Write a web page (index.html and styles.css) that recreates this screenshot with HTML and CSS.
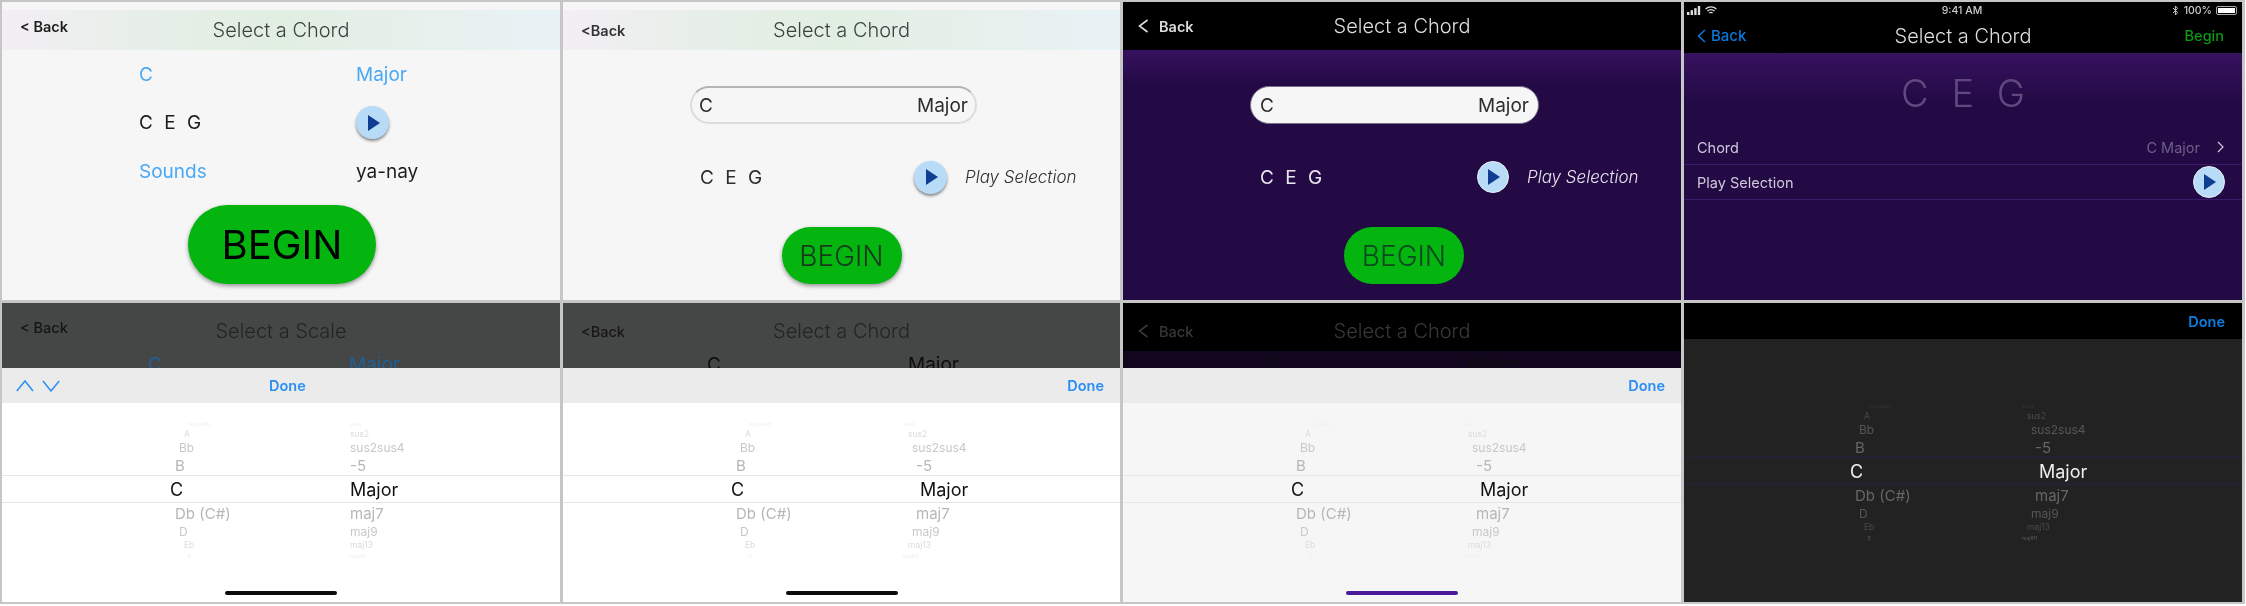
FILE: index.html
```html
<!DOCTYPE html>
<html>
<head>
  <title>Select a Chord</title>
  <link rel="stylesheet" href="styles.css">
</head>
<body>
  <div class="sheet">

    <!-- first version, text rows -->
    <section class="screen light">
      <header class="nav gradient">
        <span class="back back-raised">&lt; Back</span>
        <span class="title">Select a Chord</span>
      </header>
      <div class="text-form">
        <span class="link">C</span><span class="link">Major</span>
        <span class="notes">C E G</span>
        <span class="play"><svg viewBox="0 0 12 16"><polygon points="0,0 12,8 0,16"/></svg></span>
        <span class="link">Sounds</span><span>ya-nay</span>
      </div>
      <button class="begin begin-big">BEGIN</button>
    </section>

    <!-- pill version -->
    <section class="screen light">
      <header class="nav gradient">
        <span class="back back-tight">&lt;Back</span>
        <span class="title">Select a Chord</span>
      </header>
      <div class="pill"><span>C</span><span>Major</span></div>
      <div class="play-row">
        <span class="notes">C E G</span>
        <span class="play"><svg viewBox="0 0 12 16"><polygon points="0,0 12,8 0,16"/></svg></span>
        <em>Play Selection</em>
      </div>
      <button class="begin">BEGIN</button>
    </section>

    <!-- purple version -->
    <section class="screen purple">
      <header class="nav black">
        <span class="back back-wide"><svg class="chev-left" viewBox="0 0 11 14"><path d="M9.5 1 L1.5 7 L9.5 13"/></svg>Back</span>
        <span class="title">Select a Chord</span>
      </header>
      <div class="pill pill-solid"><span>C</span><span>Major</span></div>
      <div class="play-row">
        <span class="notes">C E G</span>
        <span class="play play-flat"><svg viewBox="0 0 12 16"><polygon points="0,0 12,8 0,16"/></svg></span>
        <em>Play Selection</em>
      </div>
      <button class="begin begin-flat">BEGIN</button>
    </section>

    <!-- native version -->
    <section class="screen purple native">
      <header class="native-head">
        <div class="status">
          <span class="status-left">
            <svg class="signal" viewBox="0 0 14 9"><rect x="0" y="6" width="2.4" height="3"/><rect x="3.6" y="4.2" width="2.4" height="4.8"/><rect x="7.2" y="2.2" width="2.4" height="6.8"/><rect x="10.8" y="0" width="2.4" height="9"/></svg>
            <svg class="wifi" viewBox="0 0 12 9"><path d="M0.6 3 A8 8 0 0 1 11.4 3"/><path d="M2.5 5 A5.2 5.2 0 0 1 9.5 5"/><path d="M4.4 7 A2.6 2.6 0 0 1 7.6 7"/></svg>
          </span>
          <span class="clock">9:41 AM</span>
          <span class="status-right">
            <svg class="bt" viewBox="0 0 7 11"><path d="M1 3 L5.6 7.6 L3.4 10 V1 L5.6 3.4 L1 8"/></svg>
            <span>100%</span>
            <span class="battery"><i></i></span>
          </span>
        </div>
        <div class="nav native-nav">
          <span class="back back-blue"><svg class="chev-left" viewBox="0 0 9 14"><path d="M8 1 L1.5 7 L8 13"/></svg>Back</span>
          <span class="title">Select a Chord</span>
          <span class="begin-link">Begin</span>
        </div>
      </header>
      <div class="big-notes">C E G</div>
      <div class="table-row first-row">
        <span>Chord</span>
        <span class="value">C Major<svg class="chev-right" viewBox="0 0 7 12"><path d="M1 1 L6 6 L1 11"/></svg></span>
      </div>
      <div class="table-row">
        <span>Play Selection</span>
        <span class="play play-flat"><svg viewBox="0 0 12 16"><polygon points="0,0 12,8 0,16"/></svg></span>
      </div>
    </section>

    <!-- scale picker open -->
    <section class="screen picker-screen">
      <div class="behind gray-behind">
        <header class="nav">
          <span class="back back-raised">&lt; Back</span>
          <span class="title">Select a Scale</span>
        </header>
        <div class="peek peek-blue"><span>C</span><span>Major</span></div>
      </div>
      <div class="toolbar toolbar-center">
        <svg class="arrows" viewBox="0 0 44 13"><path d="M0.8 12 L9 2 L17 12"/><path d="M27 2 L35 12 L43.2 2"/></svg>
        <span class="done">Done</span>
      </div>
      <div class="picker aligned">
        <div class="pk r0"><span>no quality</span><span>sus4</span></div>
        <div class="pk r1"><span>A</span><span>sus2</span></div>
        <div class="pk r2"><span>Bb</span><span>sus2sus4</span></div>
        <div class="pk r3"><span>B</span><span>-5</span></div>
        <div class="pk r4"><span>C</span><span>Major</span></div>
        <div class="pk r5"><span>Db (C#)</span><span>maj7</span></div>
        <div class="pk r6"><span>D</span><span>maj9</span></div>
        <div class="pk r7"><span>Eb</span><span>maj13</span></div>
        <div class="pk r8"><span>E</span><span>maj#11</span></div>
      </div>
      <div class="home-bar"></div>
    </section>

    <section class="screen picker-screen">
      <div class="behind gray-behind">
        <header class="nav">
          <span class="back back-tight">&lt;Back</span>
          <span class="title">Select a Chord</span>
        </header>
        <div class="peek"><span>C</span><span>Major</span></div>
      </div>
      <div class="toolbar"><span class="done">Done</span></div>
      <div class="picker">
        <div class="pk r0"><span>no quality</span><span>sus4</span></div>
        <div class="pk r1"><span>A</span><span>sus2</span></div>
        <div class="pk r2"><span>Bb</span><span>sus2sus4</span></div>
        <div class="pk r3"><span>B</span><span>-5</span></div>
        <div class="pk r4"><span>C</span><span>Major</span></div>
        <div class="pk r5"><span>Db (C#)</span><span>maj7</span></div>
        <div class="pk r6"><span>D</span><span>maj9</span></div>
        <div class="pk r7"><span>Eb</span><span>maj13</span></div>
        <div class="pk r8"><span>E</span><span>maj#11</span></div>
      </div>
      <div class="home-bar"></div>
    </section>

    <section class="screen picker-screen soft">
      <div class="behind dark-behind">
        <header class="nav">
          <span class="back back-wide"><svg class="chev-left" viewBox="0 0 11 14"><path d="M9.5 1 L1.5 7 L9.5 13"/></svg>Back</span>
          <span class="title">Select a Chord</span>
        </header>
        <div class="peek"><span>C</span><span>Major</span></div>
      </div>
      <div class="toolbar"><span class="done">Done</span></div>
      <div class="picker">
        <div class="pk r0"><span>no quality</span><span>sus4</span></div>
        <div class="pk r1"><span>A</span><span>sus2</span></div>
        <div class="pk r2"><span>Bb</span><span>sus2sus4</span></div>
        <div class="pk r3"><span>B</span><span>-5</span></div>
        <div class="pk r4"><span>C</span><span>Major</span></div>
        <div class="pk r5"><span>Db (C#)</span><span>maj7</span></div>
        <div class="pk r6"><span>D</span><span>maj9</span></div>
        <div class="pk r7"><span>Eb</span><span>maj13</span></div>
        <div class="pk r8"><span>E</span><span>maj#11</span></div>
      </div>
      <div class="home-bar home-purple"></div>
    </section>

    <section class="screen picker-screen night">
      <div class="toolbar"><span class="done">Done</span></div>
      <div class="picker">
        <div class="pk r0"><span>no quality</span><span>sus4</span></div>
        <div class="pk r1"><span>A</span><span>sus2</span></div>
        <div class="pk r2"><span>Bb</span><span>sus2sus4</span></div>
        <div class="pk r3"><span>B</span><span>-5</span></div>
        <div class="pk r4"><span>C</span><span>Major</span></div>
        <div class="pk r5"><span>Db (C#)</span><span>maj7</span></div>
        <div class="pk r6"><span>D</span><span>maj9</span></div>
        <div class="pk r7"><span>Eb</span><span>maj13</span></div>
        <div class="pk r8"><span>E</span><span>maj#11</span></div>
      </div>
    </section>

  </div>
</body>
</html>
```

FILE: styles.css
```css
:root {
  --paper: #f6f6f6;
  --edge: #c6c6c6;
  --link: #4aa9f5;
  --green: #05b50f;
  --ink: #1c1c1c;
  --done: #2a8ef5;
}
* {
  box-sizing: border-box;
}
html, body {
  margin: 0;
  background: #fff;
}
body {
  width: 2246px;
  height: 606px;
  overflow: hidden;
  font-family: Inter, "Liberation Sans", sans-serif;
  color: var(--ink);
}
.sheet {
  width: 2245px;
  height: 604px;
  padding: 2px;
  display: grid;
  grid-template-columns: 558px 557px 558px 558px;
  grid-template-rows: 298px 299px;
  gap: 3px;
  background: var(--edge);
  filter: blur(0.4px);
}
.screen {
  display: flex;
  flex-direction: column;
  overflow: hidden;
  background: var(--paper);
  font-size: 19px;
}

/* nav bars */
.nav {
  display: grid;
  grid-template-columns: 1fr auto 1fr;
  align-items: center;
  flex: none;
  height: 40px;
  margin-top: 8px;
}
.gradient {
  background: linear-gradient(90deg, #f3eef5 0%, #e7efe8 25%, #e1eee2 50%, #e6f0ea 70%, #e9f2f6 100%);
}
.black {
  height: 48px;
  margin-top: 0;
  background: #000;
  color: #ddd;
}
.title {
  font-size: 20px;
  font-weight: 300;
  color: #3d423f;
}
.black .title {
  color: #ddd;
}
.back {
  display: flex;
  align-items: center;
  font-size: 14.5px;
  font-weight: 600;
}
.back-raised {
  padding: 0 0 7px 18px;
}
.back-tight {
  padding-left: 18px;
  color: #333;
}
.back-wide {
  padding-left: 15px;
}
.chev-left {
  width: 11px;
  height: 14px;
  margin-right: 10px;
  fill: none;
  stroke: currentColor;
  stroke-width: 1.6;
}

/* text rows screen */
.text-form {
  display: grid;
  grid-template-columns: 217px 1fr;
  grid-auto-rows: 48.5px;
  align-items: center;
  padding-left: 137px;
}
.link {
  color: var(--link);
}
.notes {
  word-spacing: 6px;
}
.play {
  display: flex;
  align-items: center;
  justify-content: center;
  width: 33px;
  height: 33px;
  padding-left: 2px;
  border-radius: 50%;
  background: #b8dcf8;
  box-shadow: 0 2px 3px rgba(0, 0, 0, 0.45);
}
.play svg {
  width: 12px;
  height: 16px;
  fill: #0f3d91;
}
.play-flat {
  width: 32px;
  height: 32px;
  border: 1px solid #e4eef6;
  box-shadow: none;
}
.begin {
  display: block;
  flex: none;
  width: 120px;
  height: 57px;
  margin: 29px auto 0;
  padding: 0;
  border: none;
  border-radius: 29px;
  background: var(--green);
  box-shadow: 0 2px 4px rgba(0, 0, 0, 0.4);
  color: #173a1c;
  font-family: inherit;
  font-size: 28px;
  font-weight: 300;
}
.begin-big {
  width: 188px;
  height: 79px;
  margin: 9px 0 0 186px;
  border-radius: 40px;
  color: #000;
  font-size: 40px;
  font-weight: 400;
}
.begin-flat {
  margin-left: 221px;
  box-shadow: none;
  color: #0b4a1f;
}

/* pill screens */
.pill {
  display: flex;
  justify-content: space-between;
  align-items: center;
  flex: none;
  width: 287px;
  height: 38px;
  margin: 36px 0 0 127px;
  padding: 0 7px;
  border: 2px solid #dcdcdc;
  border-top-color: #b4b4b4;
  border-radius: 19px;
  color: #2e2e2e;
}
.pill-solid {
  width: 289px;
  border: 1px solid #77708a;
  padding: 0 9px;
  background: var(--paper);
}
.play-row {
  display: grid;
  grid-template-columns: 214px 33px auto;
  align-items: center;
  height: 42px;
  margin-top: 32px;
  padding-left: 137px;
  color: #2e2e2e;
}
.play-row em {
  margin-left: 18px;
  font-size: 17px;
  font-weight: 300;
}
.purple .play-row {
  grid-template-columns: 217px 32px auto;
  color: #e8e4ee;
}
.purple {
  background: #230a45 linear-gradient(180deg, #230a45 48px, #37125f 48px, #230a45 82px);
}

/* native screen */
.native {
  background: #210a42 linear-gradient(180deg, #37125f 51px, #230a45 100px);
}
.native-head {
  flex: none;
  height: 51px;
  background: #000;
  color: #ddd;
}
.status {
  display: grid;
  grid-template-columns: 1fr auto 1fr;
  align-items: center;
  height: 17px;
  padding: 0 5px 0 3px;
  font-size: 10.5px;
  font-weight: 500;
  color: #ccc;
}
.status-left, .status-right {
  display: flex;
  align-items: center;
}
.status-right {
  justify-content: flex-end;
}
.signal {
  width: 14px;
  height: 9px;
  fill: #ddd;
}
.wifi {
  width: 12px;
  height: 9px;
  margin-left: 4px;
  fill: none;
  stroke: #ddd;
  stroke-width: 1.4;
}
.bt {
  width: 7px;
  height: 11px;
  margin-right: 5px;
  fill: none;
  stroke: #ccc;
  stroke-width: 1;
}
.battery {
  width: 21px;
  height: 9px;
  margin-left: 4px;
  padding: 1px;
  border: 1px solid #aaa;
  border-radius: 2px;
}
.battery i {
  display: block;
  height: 100%;
  background: #fff;
}
.native-nav {
  height: 33px;
  margin: 0;
}
.native-nav .title {
  color: #ddd;
}
.back-blue {
  padding-left: 13px;
  color: #0a78d8;
  font-size: 15px;
  font-weight: 500;
}
.back-blue .chev-left {
  width: 9px;
  margin-right: 5px;
}
.begin-link {
  justify-self: end;
  padding-right: 18px;
  color: #0a9a14;
  font-size: 14.5px;
  font-weight: 500;
}
.big-notes {
  flex: none;
  height: 46px;
  margin-top: 17px;
  text-align: center;
  color: #5e4a7e;
  font-size: 38px;
  font-weight: 300;
  line-height: 46px;
  word-spacing: 12px;
}
.table-row {
  display: flex;
  justify-content: space-between;
  align-items: center;
  flex: none;
  height: 35px;
  padding: 0 17px 0 13px;
  border-bottom: 1px solid #3a1a6a;
  color: #cfc8d8;
  font-size: 14.5px;
}
.first-row {
  margin-top: 14px;
}
.value {
  display: flex;
  align-items: center;
  color: #6e5f86;
}
.chev-right {
  width: 7px;
  height: 12px;
  margin-left: 17px;
  margin-right: 1px;
  fill: none;
  stroke: #cfc8d8;
  stroke-width: 1.2;
}

/* picker sheets */
.picker-screen {
  background: #fff;
}
.soft {
  background: var(--paper);
}
.behind {
  flex: none;
  height: 65px;
  overflow: hidden;
}
.gray-behind {
  background: #444745;
  color: #141414;
}
.gray-behind .title {
  color: #232523;
}
.gray-behind .back-tight {
  color: #161616;
}
.dark-behind {
  background: #000 linear-gradient(180deg, #000 48px, #12061f 48px);
  color: #383838;
}
.dark-behind .title {
  color: #383838;
}
.behind .nav {
  margin-top: 8px;
}
.behind .back {
  font-weight: 500;
}
.peek {
  display: flex;
  padding-left: 144px;
  margin-top: 2px;
  color: #0d0d0d;
  font-size: 19px;
  line-height: 24px;
}
.peek span:first-child {
  width: 201px;
}
.peek-blue {
  padding-left: 146px;
  color: #1f5f96;
}
.toolbar {
  display: flex;
  justify-content: flex-end;
  align-items: center;
  flex: none;
  height: 35px;
  padding-right: 16px;
  background: #ebebeb;
}
.toolbar-center {
  justify-content: flex-start;
  padding: 0 0 0 14px;
}
.done {
  color: var(--done);
  font-size: 14.5px;
  font-weight: 600;
}
.arrows {
  width: 44px;
  height: 13px;
  fill: none;
  stroke: var(--done);
  stroke-width: 1.5;
}
.toolbar-center .done {
  margin-left: 209px;
}
.picker {
  flex: none;
  padding-top: 16.5px;
}
.pk {
  display: grid;
  grid-template-columns: 257px 1fr;
  white-space: nowrap;
}
.pk span:first-child {
  padding-left: var(--left);
}
.pk span:last-child {
  padding-left: var(--right);
}
.aligned .pk {
  --right: 91px;
}
.r0 { height: 9px; line-height: 9px; font-size: 5px; color: #efefef; --left: 186px; --right: 83px; }
.r1 { height: 11.5px; line-height: 11.5px; font-size: 8.5px; color: #dcdcdc; --left: 182px; --right: 88px; }
.r2 { height: 16.5px; line-height: 16.5px; font-size: 12px; color: #c8c8c8; --left: 177px; --right: 92px; }
.r3 { height: 18.5px; line-height: 18.5px; font-size: 15px; color: #b7b7b7; --left: 173px; --right: 96px; }
.r4 {
  height: 28px;
  border-top: 1px solid #e6e6e6;
  border-bottom: 1px solid #e6e6e6;
  line-height: 28px;
  font-size: 18px;
  color: #111;
  --left: 168px;
  --right: 100px;
}
.r5 { height: 20px; line-height: 22px; font-size: 15px; color: #b7b7b7; --left: 173px; --right: 96px; }
.r6 { height: 16px; line-height: 18px; font-size: 12px; color: #c8c8c8; --left: 177px; --right: 92px; }
.r7 { height: 11.5px; line-height: 12px; font-size: 8.5px; color: #dcdcdc; --left: 182px; --right: 88px; }
.r8 { height: 9px; line-height: 10px; font-size: 5px; color: #efefef; --left: 186px; --right: 83px; }
.home-bar {
  flex: none;
  width: 112px;
  height: 4px;
  margin: auto auto 7px;
  border-radius: 2px;
  background: #0c0c0c;
}
.home-purple {
  background: #4a1a9a;
}

/* dark picker */
.night {
  background: #222;
}
.night .toolbar {
  height: 36px;
  padding-right: 17px;
  background: #000;
}
.night .done {
  color: #0a7fe0;
}
.night .picker {
  padding-top: 62.5px;
  margin-left: -2px;
}
.night .pk {
  border-color: #2f1d4a;
}
.night .r0 { color: #343434; }
.night .r1 { color: #4a4a4a; }
.night .r2 { color: #565656; }
.night .r3 { color: #666; }
.night .r4 { color: #eee; }
.night .r5 { color: #666; }
.night .r6 { color: #565656; }
.night .r7 { color: #4a4a4a; }
.night .r8 { color: #5a5a5a; }
```
